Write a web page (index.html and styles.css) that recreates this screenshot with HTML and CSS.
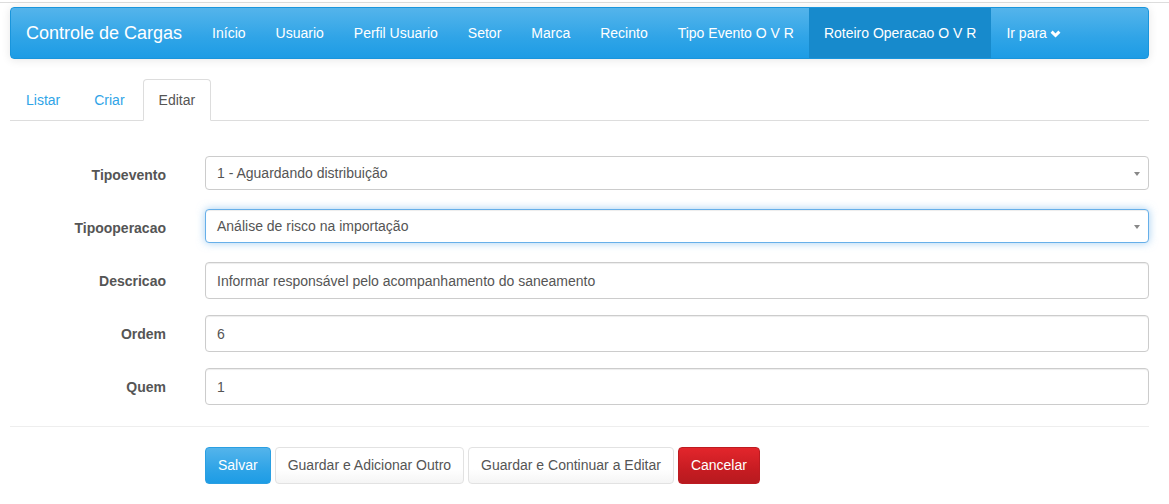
FILE: index.html
```html
<!DOCTYPE html>
<html lang="pt">
<head>
<meta charset="utf-8">
<title>Controle de Cargas</title>
<link rel="stylesheet" href="styles.css">
</head>
<body>
<div class="topline"></div>
<div class="page">
  <nav class="navbar">
    <a class="brand" href="#">Controle de Cargas</a>
    <ul class="nav">
      <li><a href="#">Início</a></li>
      <li><a href="#">Usuario</a></li>
      <li><a href="#">Perfil Usuario</a></li>
      <li><a href="#">Setor</a></li>
      <li><a href="#">Marca</a></li>
      <li><a href="#">Recinto</a></li>
      <li><a href="#">Tipo Evento O V R</a></li>
      <li class="active"><a href="#">Roteiro Operacao O V R</a></li>
      <li><a href="#">Ir para<svg class="chev" width="11" height="8" viewBox="0 0 11 8"><polyline points="1.6,1.6 5.5,5.5 9.4,1.6" fill="none" stroke="#fff" stroke-width="3"/></svg></a></li>
    </ul>
  </nav>

  <ul class="tabs">
    <li><a href="#">Listar</a></li>
    <li><a href="#">Criar</a></li>
    <li class="active"><a href="#">Editar</a></li>
  </ul>

  <form class="form">
    <div class="row">
      <label>Tipoevento</label>
      <div class="control select">1 - Aguardando distribuição<span class="arrow"></span></div>
    </div>
    <div class="row">
      <label>Tipooperacao</label>
      <div class="control select focus">Análise de risco na importação<span class="arrow"></span></div>
    </div>
    <div class="row">
      <label>Descricao</label>
      <div class="control">Informar responsável pelo acompanhamento do saneamento</div>
    </div>
    <div class="row">
      <label>Ordem</label>
      <div class="control">6</div>
    </div>
    <div class="row last">
      <label>Quem</label>
      <div class="control">1</div>
    </div>
    <hr class="sep">
    <div class="actions">
      <button type="button" class="btn primary">Salvar</button>
      <button type="button" class="btn default">Guardar e Adicionar Outro</button>
      <button type="button" class="btn default">Guardar e Continuar a Editar</button>
      <button type="button" class="btn danger">Cancelar</button>
    </div>
  </form>
</div>
</body>
</html>
```
FILE: styles.css
```css
* { box-sizing: border-box; }

body {
  margin: 0;
  font-family: "Liberation Sans", Arial, sans-serif;
  font-size: 14px;
  line-height: 20px;
  color: #555;
  background: #fff;
}

.topline {
  margin-top: 2px;
  border-top: 1px solid #dddddd;
}

.page {
  margin-left: 10px;
  width: 1139px;
  padding-top: 4px;
}

/* Navbar */
.navbar {
  display: flex;
  height: 52px;
  border: 1px solid #1995dc;
  border-radius: 4px;
  background: linear-gradient(#54b4eb, #2fa4e7 60%, #1d9ce5);
  box-shadow: 0 1px 10px rgba(0, 0, 0, 0.1);
  margin-bottom: 20px;
  overflow: hidden;
}

.brand {
  padding: 15px;
  font-size: 18px;
  line-height: 20px;
  color: #fff;
  text-decoration: none;
}

.nav {
  display: flex;
  list-style: none;
  margin: 0;
  padding: 0;
}

.nav a {
  display: block;
  padding: 15px;
  line-height: 20px;
  color: #fff;
  text-decoration: none;
}

.nav .active a {
  background: #178acc;
}

.chev {
  vertical-align: 0px;
  margin-left: 3px;
}

/* Tabs */
.tabs {
  display: flex;
  list-style: none;
  margin: 0;
  padding: 0;
  border-bottom: 1px solid #dddddd;
}

.tabs li {
  margin-bottom: -1px;
}

.tabs a {
  display: block;
  padding: 10px 15px;
  margin-right: 2px;
  line-height: 20px;
  border: 1px solid transparent;
  border-radius: 4px 4px 0 0;
  color: #2fa4e7;
  text-decoration: none;
}

.tabs .active a {
  color: #555;
  background: #fff;
  border-color: #dddddd;
  border-bottom-color: #fff;
}

/* Form */
.form {
  padding-top: 35px;
}

.row {
  display: grid;
  grid-template-columns: 156px 1fr;
  column-gap: 39px;
  align-items: center;
  height: 37px;
  margin-bottom: 16px;
}

.row.last {
  margin-bottom: 0;
}

.row label {
  text-align: right;
  font-weight: bold;
  color: #555;
}

.control {
  position: relative;
  display: flex;
  align-items: center;
  height: 37px;
  padding: 0 11px;
  border: 1px solid #cccccc;
  border-radius: 4px;
  background: #fff;
  color: #555;
  box-shadow: inset 0 1px 1px rgba(0, 0, 0, 0.075);
}

.control.select {
  height: 34px;
  align-self: start;
  box-shadow: none;
}

.control.focus {
  border-color: #66afe9;
  box-shadow: inset 0 1px 1px rgba(0, 0, 0, 0.075), 0 0 8px rgba(102, 175, 233, 0.6);
}

.arrow {
  position: absolute;
  right: 8px;
  top: 15px;
  width: 0;
  height: 0;
  border-top: 4px solid #888;
  border-left: 3px solid transparent;
  border-right: 3px solid transparent;
}

.sep {
  margin: 21px 0 20px;
  border: 0;
  border-top: 1px solid #eeeeee;
  height: 0;
}

.actions {
  display: flex;
  gap: 4px;
  padding-left: 195px;
}

.btn {
  height: 37px;
  padding: 0 12px;
  font-family: inherit;
  font-size: 14px;
  line-height: 35px;
  border: 1px solid transparent;
  border-radius: 4px;
  cursor: pointer;
}

.btn.primary {
  color: #fff;
  background: linear-gradient(#54b4eb, #2fa4e7 60%, #1d9ce5);
  border-color: #2a9fe2;
}

.btn.default {
  color: #555;
  background: linear-gradient(#fff, #fff 60%, #f5f5f5);
  border-color: #e2e2e2;
}

.btn.danger {
  color: #fff;
  background: linear-gradient(#e3262c, #c71c22 60%, #b71a1f);
  border-color: #bd1b21;
}
```
